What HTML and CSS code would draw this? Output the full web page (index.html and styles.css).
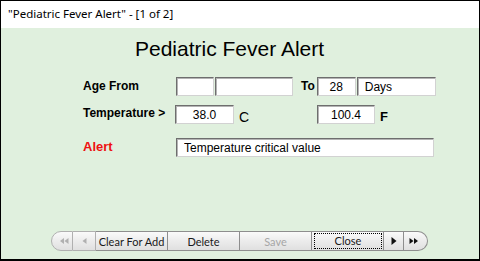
FILE: index.html
```html
<!DOCTYPE html>
<html>
<head>
<meta charset="utf-8">
<link rel="stylesheet" href="styles.css">
</head>
<body>
<div class="window">
  <div class="titlebar">"Pediatric Fever Alert" - [1 of 2]</div>
  <div class="content">
    <h1 class="heading">Pediatric Fever Alert</h1>
    <div class="form">
      <div class="row row-age">
        <span class="label">Age From</span>
        <input class="box w38" type="text" value="">
        <input class="box w78 gap1" type="text" value="">
        <span class="label to">To</span>
        <input class="box w39 center" type="text" value="28">
        <input class="box w79 gap1 left" type="text" value="Days">
      </div>
      <div class="row row-temp">
        <span class="label">Temperature &gt;</span>
        <input class="box w59 center shift" type="text" value="38.0">
        <span class="unit unit-c">C</span>
        <input class="box w58 center" type="text" value="100.4">
        <span class="unit">F</span>
      </div>
      <div class="row row-alert">
        <span class="label alert">Alert</span>
        <input class="box w258 left" type="text" value="Temperature critical value">
      </div>
    </div>
    <div class="toolbar">
      <button class="tb first w22 off" type="button"><svg width="9" height="6" viewBox="0 0 9 6"><path d="M4 0 L0 3 L4 6 Z M8.5 0 L4.5 3 L8.5 6 Z" fill="#b0b0b0"/></svg></button>
      <button class="tb w23 off" type="button"><svg width="5" height="6" viewBox="0 0 5 6"><path d="M4.5 0 L0.5 3 L4.5 6 Z" fill="#b0b0b0"/></svg></button>
      <button class="tb w72" type="button">Clear For Add</button>
      <button class="tb w72" type="button">Delete</button>
      <button class="tb w72 disabled" type="button">Save</button>
      <button class="tb w72 focus" type="button"><span class="focusring">Close</span></button>
      <button class="tb w20" type="button"><svg width="6" height="8" viewBox="0 0 6 8"><path d="M0.5 0 L5.5 4 L0.5 8 Z" fill="#111"/></svg></button>
      <button class="tb last w24" type="button"><svg width="9" height="6" viewBox="0 0 9 6"><path d="M0.5 0 L4.5 3 L0.5 6 Z M5 0 L9 3 L5 6 Z" fill="#111"/></svg></button>
    </div>
  </div>
</div>
</body>
</html>
```

FILE: styles.css
```css
* { box-sizing: border-box; }
html, body { margin: 0; padding: 0; }
body { width: 480px; height: 261px; background: #ffffff; overflow: hidden; }

.window {
  width: 480px;
  height: 261px;
  border: 1px solid #000;
  border-bottom-width: 2px;
  display: flex;
  flex-direction: column;
  background: #fff;
}

.titlebar {
  height: 27px;
  flex: none;
  padding-left: 7px;
  font-family: "Noto Sans", "DejaVu Sans", sans-serif;
  font-size: 11.5px;
  line-height: 25px;
  color: #000;
  background: #fff;
}

.content {
  flex: 1;
  background: #e0f0de;
  display: flex;
  flex-direction: column;
  padding: 9px 0 8px 0;
}

.heading {
  margin: 0 0 0 134px;
  font-family: "Liberation Sans", Arial, sans-serif;
  font-weight: normal;
  font-size: 21px;
  line-height: 24px;
  color: #000;
}

.form {
  margin-top: 16px;
  padding-left: 82px;
  display: flex;
  flex-direction: column;
}

.row {
  display: flex;
  align-items: center;
  height: 19px;
}
.row-temp { margin-top: 9px; }
.row-alert { margin-top: 14px; }

.label {
  width: 93px;
  flex: none;
  font-family: "Liberation Sans", Arial, sans-serif;
  font-weight: bold;
  font-size: 12px;
  line-height: 19px;
  color: #000;
  position: relative;
  top: -1px;
}
.row-age .label { top: 0; }
.label.alert { color: #ee1111; font-size: 13px; }
.label.to { width: auto; margin: 0 2px 0 8px; }

.box {
  flex: none;
  height: 19px;
  margin: 0;
  padding: 0 4px;
  border: 1px solid;
  border-color: #6e6e6e #d2d2d2 #d2d2d2 #6e6e6e;
  box-shadow: inset 1px 1px 0 #b4b4b4;
  background: #fff;
  font-family: "Liberation Sans", Arial, sans-serif;
  font-size: 12px;
  color: #000;
  outline: none;
}
.box.center { text-align: center; }
.box.left { padding-left: 7px; text-align: left; }
.gap1 { margin-left: 1px; }
.shift { margin-left: -1px; }

.w38 { width: 38px; }
.w39 { width: 39px; }
.w78 { width: 78px; }
.w79 { width: 79px; }
.w59 { width: 59px; }
.w58 { width: 58px; }
.w258 { width: 258px; }

.unit {
  font-family: "Liberation Sans", Arial, sans-serif;
  font-weight: bold;
  font-size: 13px;
  color: #000;
  margin-left: 5px;
  position: relative;
  top: 2px;
}
.unit-c { width: 78px; font-weight: normal; font-size: 14px; }

.toolbar {
  margin-top: auto;
  margin-left: 50px;
  display: flex;
  height: 20px;
}

.tb {
  height: 20px;
  margin: 0;
  padding: 0;
  border: 1px solid #8e8e8e;
  border-left: none;
  background: linear-gradient(#fafafa, #ececec 50%, #e0e0e0);
  font-family: Lato, "Noto Sans", sans-serif;
  font-size: 11px;
  color: #1a1a1a;
  display: flex;
  align-items: center;
  justify-content: center;
  line-height: 1;
}
.tb.first { border-left: 1px solid #8e8e8e; border-radius: 10px 0 0 10px; padding-left: 4px; }
.tb.last { border-radius: 0 10px 10px 0; padding-right: 4px; }
.tb.off { border-color: #b0b0b0; }
.tb.disabled { color: #a6a6a6; }
.tb.focus { padding: 1px 1px 1px 2px; }
.focusring {
  flex: 1;
  align-self: stretch;
  border: 1px dotted #000;
  display: flex;
  align-items: center;
  justify-content: center;
  padding-bottom: 1px;
}

.w20 { width: 20px; }
.w22 { width: 22px; }
.w23 { width: 23px; }
.w24 { width: 24px; }
.w72 { width: 72px; }
```
